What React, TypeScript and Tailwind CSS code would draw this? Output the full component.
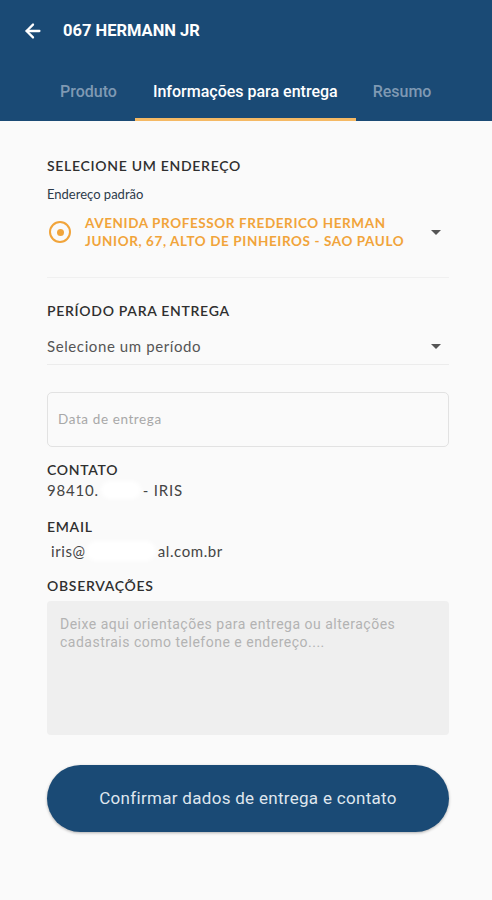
import { ArrowLeft } from "lucide-react"

function Caret() {
    return (
        <svg width="10" height="6" viewBox="0 0 10 6" className="shrink-0">
            <path d="M0 0h10L5 5z" fill="#555" />
        </svg>
    )
}

function Label({ children }: { children: React.ReactNode }) {
    return <p className="text-[14px] font-semibold uppercase leading-none tracking-[0.7px] text-[#2f2f2f]">{children}</p>
}

export default function App() {
    return (
        <div className="flex min-h-[900px] w-[492px] flex-col bg-[#fafafa] font-['Lato',sans-serif]">
            <header className="flex h-[121px] flex-col bg-[#1a4a75]">
                <div className="flex h-[62px] items-center pl-[22px]">
                    <ArrowLeft className="h-[22px] w-[22px] text-white" strokeWidth={2.5} />
                    <h1 className="ml-[19px] font-['Roboto',sans-serif] text-[16.5px] font-bold text-white">067 HERMANN JR</h1>
                </div>
                <nav className="mt-auto flex h-[59px] items-stretch pl-[42px] font-['Roboto',sans-serif] text-[16px] font-medium">
                    <div className="flex items-center px-[18px] text-[#7f99b3]">Produto</div>
                    <div className="flex items-center border-b-[3px] border-[#f5b964] px-[18px] pt-[3px] text-white">Informações para entrega</div>
                    <div className="flex items-center px-[17px] text-[#7f99b3]">Resumo</div>
                </nav>
            </header>

            <main className="flex flex-col pl-[47px] pr-[43px]">
                <div className="mt-[38px]">
                    <Label>Selecione um endereço</Label>
                </div>
                <p className="mt-[15px] text-[13px] leading-none text-[#2c3a4a]">Endereço padrão</p>
                <div className="mt-[13px] flex items-center border-b border-[#f0f0f0] pb-[27px]">
                    <div className="ml-[2px] flex h-[22px] w-[22px] items-center justify-center rounded-full border-2 border-[#f1a43a]">
                        <div className="h-[7px] w-[7px] rounded-full bg-[#f1a43a]" />
                    </div>
                    <p className="ml-[14px] flex-1 text-[13.5px] font-bold leading-[18px] tracking-[0.6px] text-[#f1a43a]">
                        AVENIDA PROFESSOR FREDERICO HERMAN
                        <br />
                        JUNIOR, 67, ALTO DE PINHEIROS - SAO PAULO
                    </p>
                    <div className="mr-[8px] mt-[2px]">
                        <Caret />
                    </div>
                </div>

                <div className="mt-[26px]">
                    <Label>Período para entrega</Label>
                </div>
                <div className="mt-[21px] flex items-center justify-between border-b border-[#ececec] pb-[10px]">
                    <span className="text-[15px] leading-none tracking-[0.6px] text-[#555]">Selecione um período</span>
                    <div className="mr-[8px]">
                        <Caret />
                    </div>
                </div>

                <div className="mt-[27px] flex h-[55px] items-center rounded-[5px] border border-[#e2e2e2] bg-[#fafafa] px-[10px] text-[13.5px] tracking-[0.6px] text-[#a8a8a8]">
                    Data de entrega
                </div>

                <div className="mt-[16px]">
                    <Label>Contato</Label>
                </div>
                <p className="mt-[4px] flex items-center text-[15px] leading-none tracking-[0.8px] text-[#444]">
                    98410.
                    <span className="mx-[2px] inline-block h-[18px] w-[40px] rounded-full bg-white blur-[2px]" />
                    - IRIS
                </p>

                <div className="mt-[21px]">
                    <Label>Email</Label>
                </div>
                <p className="mt-[7px] flex items-center text-[15px] leading-none tracking-[0.6px] text-[#444]">
                    <span className="ml-[4px]">iris@</span>
                    <span className="inline-block h-[20px] w-[70px] rounded-full bg-white blur-[2px]" />
                    <span className="ml-[2px]">al.com.br</span>
                </p>

                <div className="mt-[18px]">
                    <Label>Observações</Label>
                </div>
                <div className="mt-[8px] h-[134px] rounded-[4px] bg-[#efefef] px-[13px] pt-[14px] font-['Roboto',sans-serif] text-[14px] leading-[18px] tracking-[0.5px] text-[#b3b3b3]">
                    Deixe aqui orientações para entrega ou alterações
                    <br />
                    cadastrais como telefone e endereço....
                </div>

                <button className="mt-[30px] flex h-[67px] items-center justify-center rounded-full bg-[#1a4a75] font-['Roboto',sans-serif] text-[17px] tracking-[0.3px] text-[#dfe6ee] shadow-[0_1px_3px_rgba(0,0,0,0.3)]">
                    Confirmar dados de entrega e contato
                </button>
            </main>
        </div>
    )
}
